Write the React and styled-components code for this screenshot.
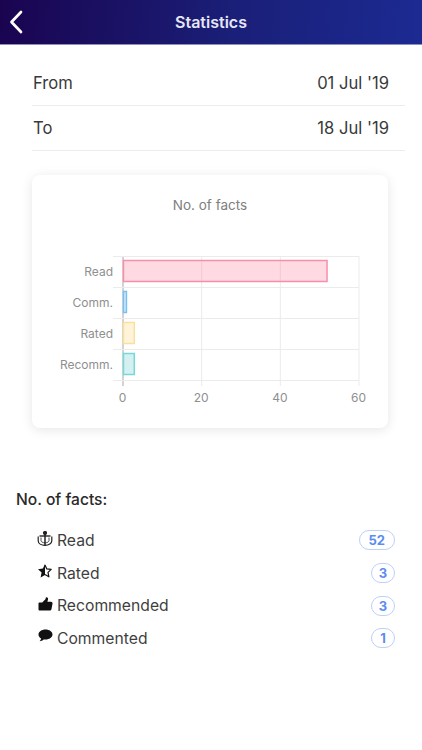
import React from 'react';
import styled, { createGlobalStyle } from 'styled-components';

const GlobalStyle = createGlobalStyle`
  html, body {
    margin: 0;
    padding: 0;
    background: #fff;
    font-family: Inter, "Liberation Sans", sans-serif;
  }
`;

const Page = styled.div`
  width: 422px;
  height: 750px;
  overflow: hidden;
  background: #fff;
`;

const Header = styled.header`
  height: 45px;
  box-sizing: border-box;
  display: grid;
  grid-template-columns: 44px 1fr 44px;
  align-items: center;
  background: linear-gradient(95deg, #1a0450 0%, #1a1f78 55%, #1c2a92 100%);
  border-bottom: 1px solid #8f8fc0;
  color: #fff;
`;

const BackButton = styled.button`
  border: 0;
  padding: 0 0 0 9px;
  background: none;
  display: flex;
  align-items: center;
  justify-content: flex-start;
`;

const Title = styled.h1`
  margin: 0;
  text-align: center;
  font-size: 16px;
  font-weight: 600;
  color: #e6e6f5;
`;

const DateList = styled.div`
  margin: 16px 17px 0 32px;
`;

const DateRow = styled.div`
  height: 45px;
  box-sizing: border-box;
  display: flex;
  align-items: center;
  justify-content: space-between;
  padding: 0 16px 0 1px;
  border-bottom: 1px solid #ececec;
  font-size: 16.6px;
  color: #3a3a3a;
`;

const Card = styled.section`
  width: 356px;
  height: 253px;
  margin: 24px 0 0 32px;
  background: #fff;
  border-radius: 8px;
  box-shadow: 0 2px 12px rgba(0, 0, 0, 0.1);
`;

const Chart = styled.svg`
  display: block;
  font-family: Inter, "Liberation Sans", sans-serif;
`;

const Summary = styled.section`
  margin: 62px 27px 0 16px;
`;

const SummaryTitle = styled.h2`
  margin: 0 0 14px;
  font-size: 15.6px;
  line-height: 20px;
  font-weight: 500;
  color: #2a2a2a;
`;

const StatRow = styled.div`
  height: 32.7px;
  display: flex;
  align-items: center;
  padding-left: 21px;
  font-size: 15.7px;
  color: #3f3f3f;
`;

const StatIcon = styled.span`
  width: 16px;
  height: 16px;
  margin-right: 4px;
  display: flex;
  align-items: center;
  justify-content: center;
  position: relative;
  top: -2px;
  color: #111;
`;

const StatLabel = styled.span`
  flex: 1;
`;

const Badge = styled.span`
  min-width: 10px;
  height: 18px;
  padding: 0 ${props => (props.$wide ? 9 : 6)}px;
  display: flex;
  align-items: center;
  justify-content: center;
  border: 1.5px solid #bcd0fa;
  border-radius: 10px;
  font-size: 13px;
  font-weight: 700;
  color: #5b8def;
`;

const BackIcon = () => (
  <svg width="15" height="24" viewBox="0 0 15 24" fill="none" stroke="#fff" strokeWidth="2.7" strokeLinecap="round" strokeLinejoin="round">
    <path d="M12 2 2.500 12 12 22" />
  </svg>
);

const AnchorIcon = () => (
  <svg width="16" height="15" viewBox="0 0 16 15" fill="none" stroke="#222" strokeWidth="1.2">
    <circle cx="8" cy="1.900" r="1.500" fill="#222" />
    <path d="M8 3v11.500" strokeWidth="1.500" />
    <path d="M2.500 5h11" strokeWidth="1.400" />
    <path d="M1.200 5.500v4.300c0 2.700 3 4.600 6.800 4.600s6.800-1.900 6.800-4.600V5.500" />
    <path d="M4 6.500v3c0 1.200 1.400 2.200 4 2.400 2.600-.2 4-1.200 4-2.400v-3" strokeWidth="0.800" />
  </svg>
);

const StarIcon = () => (
  <svg width="16" height="16" viewBox="0 0 16 16">
    <path d="M8 1 5.900 5.600 1 6.200l3.600 3.300L3.600 14.400 8 12z" fill="#111" />
    <path d="M8 1.900l1.800 4 4.400.5-3.200 3 .9 4.400L8 11.600" fill="none" stroke="#111" strokeWidth="1.200" strokeLinejoin="round" />
  </svg>
);

const ThumbIcon = () => (
  <svg width="15" height="14" viewBox="0 0 15 14">
    <path d="M0.500 6.600C0.500 6 1 5.600 1.600 5.600h2.600L7.400 2.200 8 .3C9.600 0 10.400 1.200 10 2.600L9.400 4.800h3.600c1.200 0 1.800 1 1.500 2l-1 5.200c-.2 1-.9 1.600-2 1.600H1.800c-.8 0-1.300-.5-1.300-1.200z" fill="#111" />
  </svg>
);

const BubbleIcon = () => (
  <svg width="15" height="14" viewBox="0 0 15 14">
    <path d="M7.500.6C3.600.6.5 2.800.5 5.600c0 1.600 1 3 2.600 3.900-.2.900-.7 1.900-1.500 2.700 1.600 0 3-.7 4-1.700.6.100 1.200.1 1.900.1 3.900 0 7-2.200 7-5S11.400.6 7.500.6z" fill="#111" />
  </svg>
);

const bars = [
  { label: 'Read', value: 52, fill: 'rgba(255,99,132,0.24)', stroke: '#f78fab' },
  { label: 'Comm.', value: 1, fill: 'rgba(54,162,235,0.22)', stroke: '#78c0f0' },
  { label: 'Rated', value: 3, fill: 'rgba(255,206,86,0.22)', stroke: '#fbdf9c' },
  { label: 'Recomm.', value: 3, fill: 'rgba(75,192,192,0.24)', stroke: '#78d8d8' },
];

const ticks = [0, 20, 40, 60];

// coordinates are relative to the card
const plot = { left: 91, right: 327, top: 81, rowH: 31 };
const xFor = value => plot.left + (value / 60) * (plot.right - plot.left);

const FactsChart = () => (
  <Chart width="356" height="253" viewBox="0 0 356 253">
    <text x="178" y="35" textAnchor="middle" fontSize="13.5" fill="#808080">No. of facts</text>
    {ticks.map(tick => (
      <g key={tick}>
        <line
          x1={xFor(tick)}
          x2={xFor(tick)}
          y1={plot.top}
          y2={plot.top + plot.rowH * 4 + 6}
          stroke={tick === 0 ? '#a8a8a8' : '#ebebeb'}
        />
        <text x={xFor(tick) - 0.5} y="227" textAnchor="middle" fontSize="12" fill="#8f8f8f">{tick}</text>
      </g>
    ))}
    {[0, 1, 2, 3, 4].map(i => (
      <line
        key={i}
        x1={plot.left - 10}
        x2={plot.right}
        y1={plot.top + i * plot.rowH + 0.5}
        y2={plot.top + i * plot.rowH + 0.5}
        stroke="#ebebeb"
      />
    ))}
    {bars.map((bar, i) => (
      <g key={bar.label}>
        <text
          x={plot.left - 10}
          y={plot.top + i * plot.rowH + 19.5}
          textAnchor="end"
          fontSize="12"
          fill="#8f8f8f"
        >
          {bar.label}
        </text>
        <rect
          x={plot.left + 0.5}
          y={plot.top + i * plot.rowH + 4.5}
          width={xFor(bar.value) - plot.left - 1}
          height="21"
          fill={bar.fill}
          stroke={bar.stroke}
          strokeWidth="1.5"
        />
      </g>
    ))}
  </Chart>
);

const stats = [
  { label: 'Read', count: 52, icon: <AnchorIcon /> },
  { label: 'Rated', count: 3, icon: <StarIcon /> },
  { label: 'Recommended', count: 3, icon: <ThumbIcon /> },
  { label: 'Commented', count: 1, icon: <BubbleIcon /> },
];

export default function App() {
  return (
    <Page>
      <GlobalStyle />
      <Header>
        <BackButton aria-label="Back">
          <BackIcon />
        </BackButton>
        <Title>Statistics</Title>
      </Header>
      <DateList>
        <DateRow><span>From</span><span>01 Jul '19</span></DateRow>
        <DateRow><span>To</span><span>18 Jul '19</span></DateRow>
      </DateList>
      <Card>
        <FactsChart />
      </Card>
      <Summary>
        <SummaryTitle>No. of facts:</SummaryTitle>
        {stats.map(stat => (
          <StatRow key={stat.label}>
            <StatIcon>{stat.icon}</StatIcon>
            <StatLabel>{stat.label}</StatLabel>
            <Badge $wide={stat.count > 9}>{stat.count}</Badge>
          </StatRow>
        ))}
      </Summary>
    </Page>
  );
}
